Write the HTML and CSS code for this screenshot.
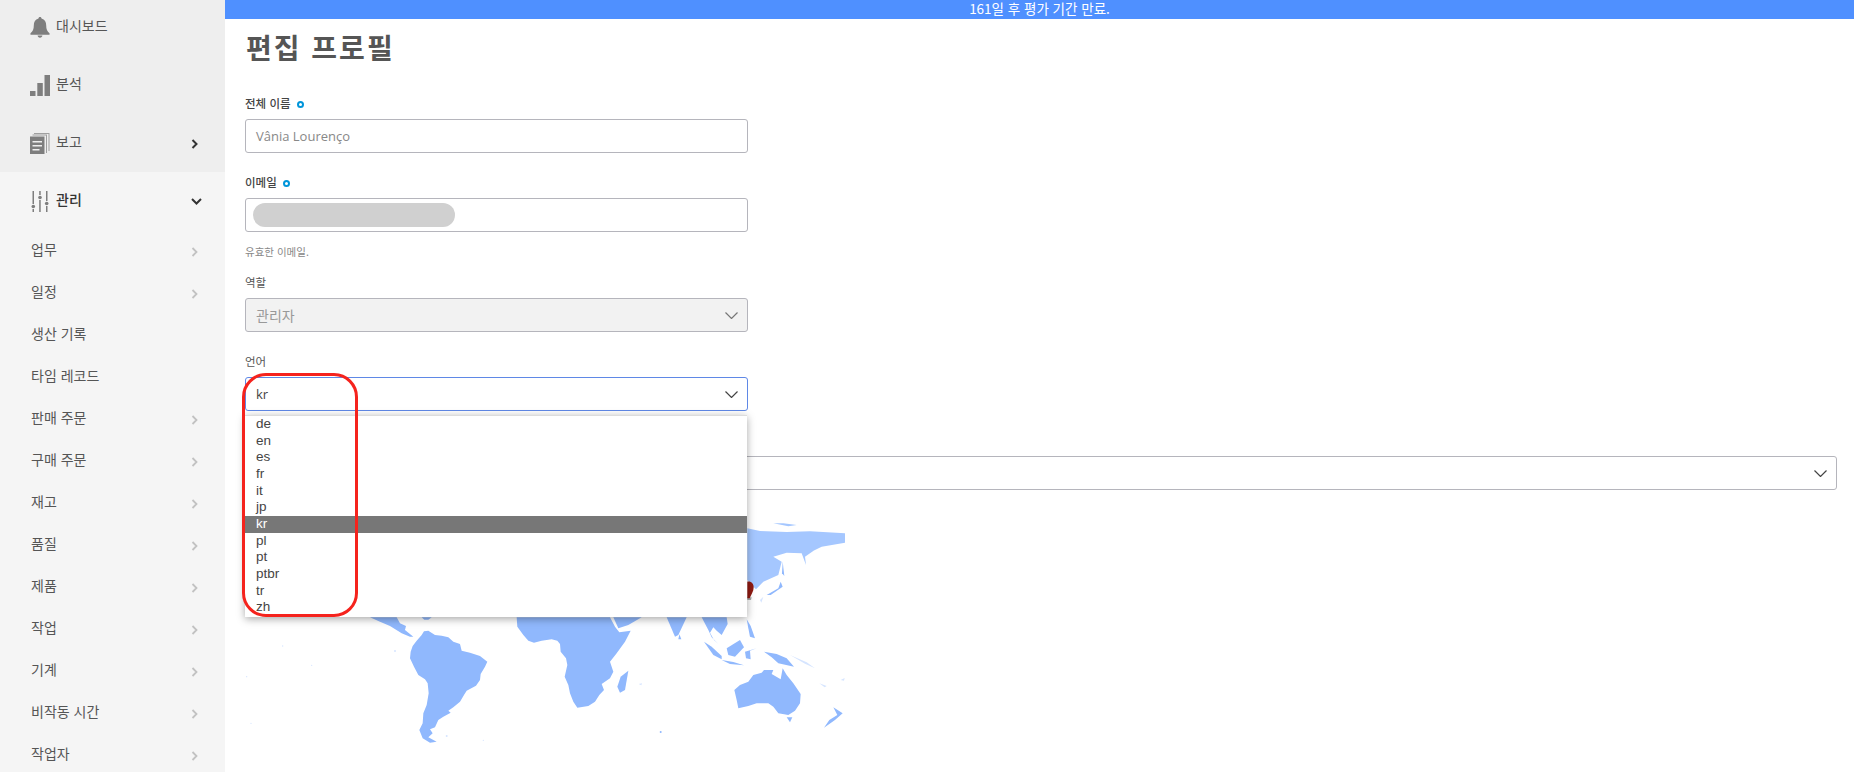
FILE: index.html

```html
<!DOCTYPE html>
<html lang="ko">
<head>
    <meta charset="UTF-8">
    <meta name="viewport" content="width=device-width, initial-scale=1.0">
    <title>편집 프로필</title>
    <link rel="stylesheet" href="styles.css">
</head>
<body>
    <div class="sidebar">
        <div class="nav-top">
            <div class="nav-main">
                <svg class="nav-icon" viewBox="0 0 20 22"><path d="M10 0c1 0 1.600.7 1.600 1.700C15 2.600 16.500 5.500 16.500 9c0 4 1 6 3.500 8v1.500H0V17c2.500-2 3.500-4 3.500-8 0-3.500 1.500-6.400 4.900-7.300C8.400.7 9 0 10 0zM7.500 19.500h5c0 1.300-1.100 2.300-2.500 2.300s-2.500-1-2.500-2.300z"/></svg>
                <span>대시보드</span>
            </div>
            <div class="nav-main">
                <svg class="nav-icon" viewBox="0 0 20 21"><path d="M0 16h5.500v5H0zM7.300 8h5.500v13H7.300zM14.500 0H20v21h-5.500z"/></svg>
                <span>분석</span>
            </div>
            <div class="nav-main">
                <svg class="nav-icon" viewBox="0 0 20 21"><path d="M4 0h15.500v18h-1V1H4zM2.500 1.500h14.500v18.500h-1V2.500H2.500z" opacity=".7"/><path d="M0 3.500h14.500V21H0zM2.500 8v1.500h9.500V8zm0 4v1.500h9.500V12zm0 4v1.500h7V16z"/></svg>
                <span>보고</span>
                <svg class="chev chev-dark" viewBox="0 0 7 10"><path d="M1.500 1l4 4-4 4"/></svg>
            </div>
        </div>
        <div class="nav-bottom">
            <div class="nav-main nav-open">
                <svg class="nav-icon" viewBox="0 0 17 21"><path d="M1 0h1.500v13H1zM1 18h1.500v3H1zM7.700 0h1.500v4H7.700zM7.700 9h1.500v12H7.700zM14.500 0H16v10h-1.500zM14.500 15H16v6h-1.500z"/><circle cx="1.800" cy="15.500" r="1.800"/><circle cx="8.500" cy="6.500" r="1.800"/><circle cx="15.200" cy="12.500" r="1.800"/></svg>
                <span>관리</span>
                <svg class="chev chev-down" viewBox="0 0 11 7"><path d="M1 1l4.500 4.500L10 1"/></svg>
            </div>
            <div class="nav-sub"><span>업무</span><svg class="chev" viewBox="0 0 7 10"><path d="M1.500 1l4 4-4 4"/></svg></div>
            <div class="nav-sub"><span>일정</span><svg class="chev" viewBox="0 0 7 10"><path d="M1.500 1l4 4-4 4"/></svg></div>
            <div class="nav-sub"><span>생산 기록</span></div>
            <div class="nav-sub"><span>타임 레코드</span></div>
            <div class="nav-sub"><span>판매 주문</span><svg class="chev" viewBox="0 0 7 10"><path d="M1.500 1l4 4-4 4"/></svg></div>
            <div class="nav-sub"><span>구매 주문</span><svg class="chev" viewBox="0 0 7 10"><path d="M1.500 1l4 4-4 4"/></svg></div>
            <div class="nav-sub"><span>재고</span><svg class="chev" viewBox="0 0 7 10"><path d="M1.500 1l4 4-4 4"/></svg></div>
            <div class="nav-sub"><span>품질</span><svg class="chev" viewBox="0 0 7 10"><path d="M1.500 1l4 4-4 4"/></svg></div>
            <div class="nav-sub"><span>제품</span><svg class="chev" viewBox="0 0 7 10"><path d="M1.500 1l4 4-4 4"/></svg></div>
            <div class="nav-sub"><span>작업</span><svg class="chev" viewBox="0 0 7 10"><path d="M1.500 1l4 4-4 4"/></svg></div>
            <div class="nav-sub"><span>기계</span><svg class="chev" viewBox="0 0 7 10"><path d="M1.500 1l4 4-4 4"/></svg></div>
            <div class="nav-sub"><span>비작동 시간</span><svg class="chev" viewBox="0 0 7 10"><path d="M1.500 1l4 4-4 4"/></svg></div>
            <div class="nav-sub"><span>작업자</span><svg class="chev" viewBox="0 0 7 10"><path d="M1.500 1l4 4-4 4"/></svg></div>
        </div>
    </div>

    <div class="main">
        <div class="trial-banner">161일 후 평가 기간 만료.</div>
        <div class="content">
            <h1 class="page-title">편집 프로필</h1>

            <div class="field">
                <div class="field-label label-req">전체 이름 <i class="req-dot"></i></div>
                <div class="field-box box-text">Vânia Lourenço</div>
            </div>

            <div class="field">
                <div class="field-label label-req">이메일 <i class="req-dot"></i></div>
                <div class="field-box"><div class="blur-pill"></div></div>
                <div class="field-hint">유효한 이메일.</div>
            </div>

            <div class="field">
                <div class="field-label">역할</div>
                <div class="field-box box-text box-disabled">
                    관리자
                    <svg class="select-arrow" viewBox="0 0 13 7"><path d="M.5.5l6 6 6-6"/></svg>
                </div>
            </div>

            <div class="field lang-field">
                <div class="field-label">언어</div>
                <div class="field-box box-text box-focus">
                    kr
                    <svg class="select-arrow" viewBox="0 0 13 7"><path d="M.5.5l6 6 6-6"/></svg>
                </div>
                <div class="lang-menu">
                    <div class="lang-option">de</div>
                    <div class="lang-option">en</div>
                    <div class="lang-option">es</div>
                    <div class="lang-option">fr</div>
                    <div class="lang-option">it</div>
                    <div class="lang-option">jp</div>
                    <div class="lang-option selected">kr</div>
                    <div class="lang-option">pl</div>
                    <div class="lang-option">pt</div>
                    <div class="lang-option">ptbr</div>
                    <div class="lang-option">tr</div>
                    <div class="lang-option">zh</div>
                </div>
                <div class="red-mark"></div>
            </div>

            <div class="field field-wide">
                <div class="field-label">&nbsp;</div>
                <div class="field-box">
                    <svg class="select-arrow" viewBox="0 0 13 7"><path d="M.5.5l6 6 6-6"/></svg>
                </div>
            </div>

            <!-- coordinates are page pixels, viewBox starts where the map starts -->
            <svg class="world-map" viewBox="245 500 620 260">
                <g transform="translate(240 520) scale(.33333)">
                    <path d="M512 395L518 378 530 362 545 345 552 334 565 332 585 345 605 347 625 352 640 365 660 372 665 392 690 398 720 408 742 425 735 440 722 462 720 480 708 497 680 512 672 525 660 545 640 562 625 572 632 578 610 590 595 600 585 622 570 628 578 640 565 652 590 665 570 668 548 655 538 630 548 610 550 580 560 555 566 520 563 490 555 478 535 465 522 440 510 415z"/>
                    <path d="M390 292L470 292 480 310 498 318 495 330 520 350 510 350 485 340 450 318 420 305z"/>
                    <path d="M545 292h30l-10 7h-12z"/>
                    <circle cx="465" cy="393" r="3" class="faint"/><circle cx="33" cy="610" r="2" class="faint"/><circle cx="215" cy="436" r="2" class="faint"/><circle cx="20" cy="470" r="2" class="faint"/><circle cx="620" cy="648" r="3" class="faint"/><circle cx="730" cy="661" r="2" class="faint"/><circle cx="128" cy="378" r="2" class="faint"/>
                </g>
                <g transform="translate(560 520) scale(.33333)">
                    <path d="M-130 292L-128 320-110 345-95 362-78 368-55 362-25 358-8 362 0 372 2 395 18 415 22 435 14 470 25 495 30 520 40 545 52 563 85 558 105 545 118 525 132 510 125 492 150 475 160 455 150 425 170 400 195 365 212 332 178 337 165 320 150 292z"/>
                    <path d="M160 292L245 292 205 315 175 325z"/>
                    <path d="M205 452L195 510 180 518 172 500 182 470z"/>
                    <path d="M320 292L380 292 355 345 345 350z"/>
                    <path d="M358 343L364 358 355 358z"/>
                    <path d="M425 292L500 292 503 312 485 345 470 332 460 322 450 338 462 360 475 372 455 352 445 330 432 305z"/>
                    <path d="M432 365L455 380 485 408 485 418 460 405z"/>
                    <path d="M485 420L520 426 552 436 510 432z"/>
                    <path d="M500 385L540 360 552 382 525 410 505 405z"/>
                    <path d="M555 395L590 385 570 392 572 418 558 415z"/>
                    <path d="M612 395L650 402 680 415 702 440 655 430 635 412z"/>
                    <path d="M560 298L572 318 585 355 570 350 565 325z"/>
                    <path d="M523 510L540 495 565 485 580 465 605 458 612 450 640 450 635 462 662 478 668 445 680 465 700 490 722 522 720 550 705 572 685 585 655 580 640 560 625 550 590 550 565 558 535 565 530 540z"/>
                    <path d="M680 592L697 592 690 607z"/>
                    <path d="M820 562L848 580 825 600 792 623 808 600 832 585z"/>
                    <path d="M620 225L655 205 662 185 668 200 632 225z"/>
                    <path d="M668 125L673 168 666 160z"/>
                    <path d="M778 490l22 8-6 4zM842 480l12-6-2 8zM236 492l10-2-2 6z" class="faint"/>
                    <path d="M690 405l50 22 25 18-30-14zM600 240l10-10-6 18z" class="faint"/>
                    <circle cx="302" cy="636" r="3"/>
                    <path class="land-north" d="M562 25L600 33 680 36 750 34 855 40 855 68 785 80 745 100 778 80 735 110 738 135 725 100 680 98 640 110 665 125 655 165 610 185 588 208 570 190 562 180z"/>
                    <path class="land-north" d="M640 10h30l40 5-25 4z"/>
                    <path class="map-pin-shadow" d="M562 232h13l-2 8h-11z"/>
                    <path class="map-pin" d="M562 185c12-2 19 6 19 17 0 12-7 22-12 33h-7z"/>
                </g>
            </svg>
        </div>
    </div>
</body>
</html>
```

FILE: styles.css

```css
* {
    margin: 0;
    padding: 0;
    box-sizing: border-box;
}
body {
    font-family: "Noto Sans CJK KR", "Noto Sans", sans-serif;
    color: #555;
    display: flex;
    height: 100vh;
    overflow: hidden;
    background: #fff;
}
.sidebar {
    width: 225px;
    flex-shrink: 0;
    height: 100%;
    overflow: hidden;
    background: #f5f5f5;
    font-size: 14px;
}
.nav-top {
    background: #eee;
    padding-bottom: 2px;
    margin-top: -4px;
}
.nav-main {
    display: flex;
    align-items: center;
    height: 58px;
    padding-left: 30px;
    position: relative;
}
.nav-icon {
    width: 20px;
    height: 21px;
    margin-right: 6px;
    margin-top: 4px;
    fill: #7e7e7e;
}
.nav-open {
    height: 56px;
    padding-bottom: 2px;
    color: #333;
    font-weight: 500;
}
.nav-sub {
    display: flex;
    align-items: center;
    height: 42px;
    padding-left: 31px;
    position: relative;
}
.chev {
    width: 7px;
    height: 10px;
    position: absolute;
    left: 191px;
    margin-top: 5px;
    fill: none;
    stroke: #c2c2c2;
    stroke-width: 1.800;
}
.chev-dark {
    stroke: #333;
    stroke-width: 2;
}
.chev-down {
    width: 11px;
    height: 7px;
    stroke: #333;
    stroke-width: 2;
    margin-top: 5px;
}
.main {
    flex: 1;
    min-width: 0;
}
.trial-banner {
    height: 19px;
    line-height: 17px;
    background: #4f90ff;
    color: #fff;
    font-size: 13.500px;
    text-align: center;
}
.content {
    padding: 0 17px 0 20px;
}
.page-title {
    font-size: 28px;
    font-weight: 700;
    line-height: 40px;
    padding-top: 8px;
    margin-bottom: 29px;
    margin-left: 1px;
    letter-spacing: 2px;
    color: #555;
}
.field {
    width: 503px;
    margin-bottom: 22px;
}
.field-wide {
    width: 100%;
    margin-bottom: 0;
}
.lang-field {
    position: relative;
}
.field-label {
    font-size: 11.500px;
    line-height: 14px;
    height: 16px;
    margin-bottom: 7px;
}
.label-req {
    font-weight: 500;
    color: #444;
}
.req-dot {
    display: inline-block;
    width: 7px;
    height: 7px;
    margin-left: 3px;
    border: 2px solid #0095da;
    border-radius: 50%;
}
.field-box {
    height: 34px;
    border: 1px solid #b5b5bc;
    border-radius: 3px;
    position: relative;
    display: flex;
    align-items: center;
}
.box-text {
    padding-left: 10px;
    font-family: "Open Sans", "Noto Sans CJK KR", sans-serif;
    font-size: 13px;
    color: #888;
}
.box-disabled {
    background: #f2f2f2;
    color: #999;
    font-size: 14px;
}
.box-focus {
    border-color: #5f88e6;
    color: #444;
}
.blur-pill {
    width: 202px;
    height: 24px;
    margin-left: 7px;
    border-radius: 12px;
    background: #d0d0d0;
}
.field-hint {
    font-size: 10.500px;
    line-height: 16px;
    margin-top: 12px;
    margin-bottom: -7px;
    color: #888;
}
.select-arrow {
    position: absolute;
    right: 9px;
    top: 13px;
    width: 13px;
    height: 7px;
    fill: none;
    stroke: #444;
    stroke-width: 1.200;
}
.box-disabled .select-arrow {
    stroke: #777;
}
.lang-menu {
    position: absolute;
    left: 0;
    right: 1px;
    top: 61px;
    z-index: 5;
    height: 202px;
    background: #fff;
    border-top: 1px solid #ddd;
    box-shadow: 0 2px 8px rgba(0, 0, 0, 0.35);
    font-family: "Liberation Sans", Arial, sans-serif;
    font-size: 13.500px;
    color: #444;
}
.lang-option {
    height: 16.670px;
    line-height: 16.670px;
    padding-left: 11px;
}
.lang-option.selected {
    background: #777;
    color: #fff;
}
.red-mark {
    position: absolute;
    left: -3px;
    top: 19px;
    width: 116px;
    height: 244px;
    z-index: 6;
    border: 3px solid #f5231d;
    border-radius: 24px;
}
.world-map {
    display: block;
    width: 620px;
    height: 260px;
    margin-top: 10px;
    fill: #90b8fd;
    filter: blur(0.4px);
}
.world-map .land-north {
    fill: #a5c7ff;
}
.world-map .faint {
    fill: #d6e5ff;
}
.world-map .map-pin {
    fill: #8f1a12;
}
.world-map .map-pin-shadow {
    fill: #aaa;
}
```
